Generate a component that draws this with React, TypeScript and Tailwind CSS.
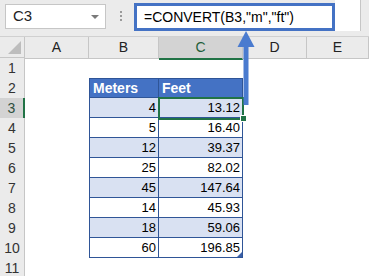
import React from "react";

// Meters -> feet, as shown in the sheet
const rows = [
  { m: 4, ft: "13.12" },
  { m: 5, ft: "16.40" },
  { m: 12, ft: "39.37" },
  { m: 25, ft: "82.02" },
  { m: 45, ft: "147.64" },
  { m: 14, ft: "45.93" },
  { m: 18, ft: "59.06" },
  { m: 60, ft: "196.85" },
];

const cols = ["A", "B", "C", "D", "E"];

function ColHeader({ label }: { label: string }) {
  const active = label === "C";
  return (
    <div
      className={`flex items-center justify-center border-r border-[#c6c6c6] text-[14px] ${
        active
          ? "bg-[#d3d3d3] border-b-2 border-b-[#217346] text-[#1e5e3a]"
          : "bg-[#ebebeb] border-b border-b-[#c6c6c6] text-[#222]"
      }`}
    >
      {label}
    </div>
  );
}

function RowHeader({ n }: { n: number }) {
  const active = n === 3;
  return (
    <div
      className={`flex items-center justify-center border-b border-[#c6c6c6] text-[14px] ${
        active
          ? "bg-[#d3d3d3] border-r-2 border-r-[#217346] text-[#2f4f3f]"
          : "bg-[#ebebeb] border-r border-r-[#c6c6c6] text-[#333]"
      }`}
    >
      {n}
    </div>
  );
}

export default function App() {
  return (
    <div className="relative w-[369px] h-[276px] overflow-hidden bg-white font-['Liberation_Sans',Arial,sans-serif]">
      {/* formula bar */}
      <div className="relative flex h-[37px] items-start bg-[#ebebeb] border-b border-[#d0d0d0]">
        <div className="ml-[5px] mt-[4px] flex h-[25px] w-[101px] items-center justify-between border border-[#c6c6c6] bg-white pl-[7px] pr-[6px] text-[15px] text-[#222]">
          <span>C3</span>
          <span className="h-0 w-0 border-x-[4px] border-t-[4px] border-x-transparent border-t-[#7a7a7a]" />
        </div>
        <div className="ml-[14px] mt-[11px] flex flex-col gap-[2px]">
          <span className="h-[2px] w-[2px] bg-[#9a9a9a]" />
          <span className="h-[2px] w-[2px] bg-[#9a9a9a]" />
          <span className="h-[2px] w-[2px] bg-[#9a9a9a]" />
        </div>
        <div className="ml-[12px] mt-[3px] flex h-[28px] w-[201px] items-center border-[3px] border-[#4472c4] bg-white pl-[7px] text-[14px] text-black">
          =CONVERT(B3,"m","ft")
        </div>
        <div className="mt-0 h-[31px] w-[26px] bg-white border-r border-[#c6c6c6]" />
      </div>

      {/* sheet grid */}
      <div className="grid grid-cols-[25px_64px_70px_84px_64px_62px]">
        {/* header row */}
        <div className="relative h-[21px] bg-[#ebebeb] border-r border-b border-[#c6c6c6]">
          <svg className="absolute right-[3px] bottom-[3px]" width="13" height="13" viewBox="0 0 13 13">
            <polygon points="13,0 13,13 0,13" fill="#bdbdbd" />
          </svg>
        </div>
        {cols.map((c) => (
          <div key={c} className="grid h-[21px]">
            <ColHeader label={c} />
          </div>
        ))}

        {Array.from({ length: 11 }, (_, i) => i + 1).map((n) => {
          const inTable = n >= 2 && n <= 10;
          const isHead = n === 2;
          const band = n >= 3 && n % 2 === 1;
          const data = n >= 3 && n <= 10 ? rows[n - 3] : null;
          const bg = isHead ? "bg-[#4472c4]" : band ? "bg-[#d9e1f2]" : "bg-white";
          const top = isHead ? "border-t" : "";
          return (
            <React.Fragment key={n}>
              <div className="grid h-[20px]">
                <RowHeader n={n} />
              </div>
              <div className="h-[20px]" />
              {inTable ? (
                <>
                  <div
                    className={`flex h-[20px] items-center border-l border-r border-b border-[#2f5597] ${top} ${bg} ${
                      isHead ? "pl-[3px] text-[14px] font-bold text-white" : "justify-end pr-[2px] text-[13px] text-black"
                    }`}
                  >
                    {isHead ? "Meters" : data?.m}
                  </div>
                  <div
                    className={`relative flex h-[20px] items-center border-r border-b border-[#2f5597] ${top} ${bg} ${
                      isHead ? "pl-[3px] text-[14px] font-bold text-white" : "justify-end pr-[2px] text-[13px] text-black"
                    }`}
                  >
                    {isHead ? "Feet" : data?.ft}
                    {n === 10 && (
                      <span className="absolute right-0 bottom-0 h-0 w-0 border-l-[5px] border-b-[5px] border-l-transparent border-b-[#3a5fa8]" />
                    )}
                  </div>
                </>
              ) : (
                <>
                  <div className="h-[20px]" />
                  <div className="h-[20px]" />
                </>
              )}
              <div className="h-[20px]" />
              <div className="h-[20px]" />
            </React.Fragment>
          );
        })}
      </div>

      {/* active cell C3 */}
      <div className="absolute left-[158px] top-[97px] h-[23px] w-[86px] border-2 border-[#217346]" />
      <div className="absolute left-[240px] top-[115px] h-[7px] w-[7px] border border-white bg-[#217346]" />

      {/* arrow from cell to formula */}
      <svg className="absolute left-0 top-0" width="369" height="276" viewBox="0 0 369 276">
        <rect x="243.5" y="45" width="5" height="60" fill="#4a7bcf" />
        <polygon points="237.5,47 254.5,47 246,31" fill="#4a7bcf" />
      </svg>
    </div>
  );
}
